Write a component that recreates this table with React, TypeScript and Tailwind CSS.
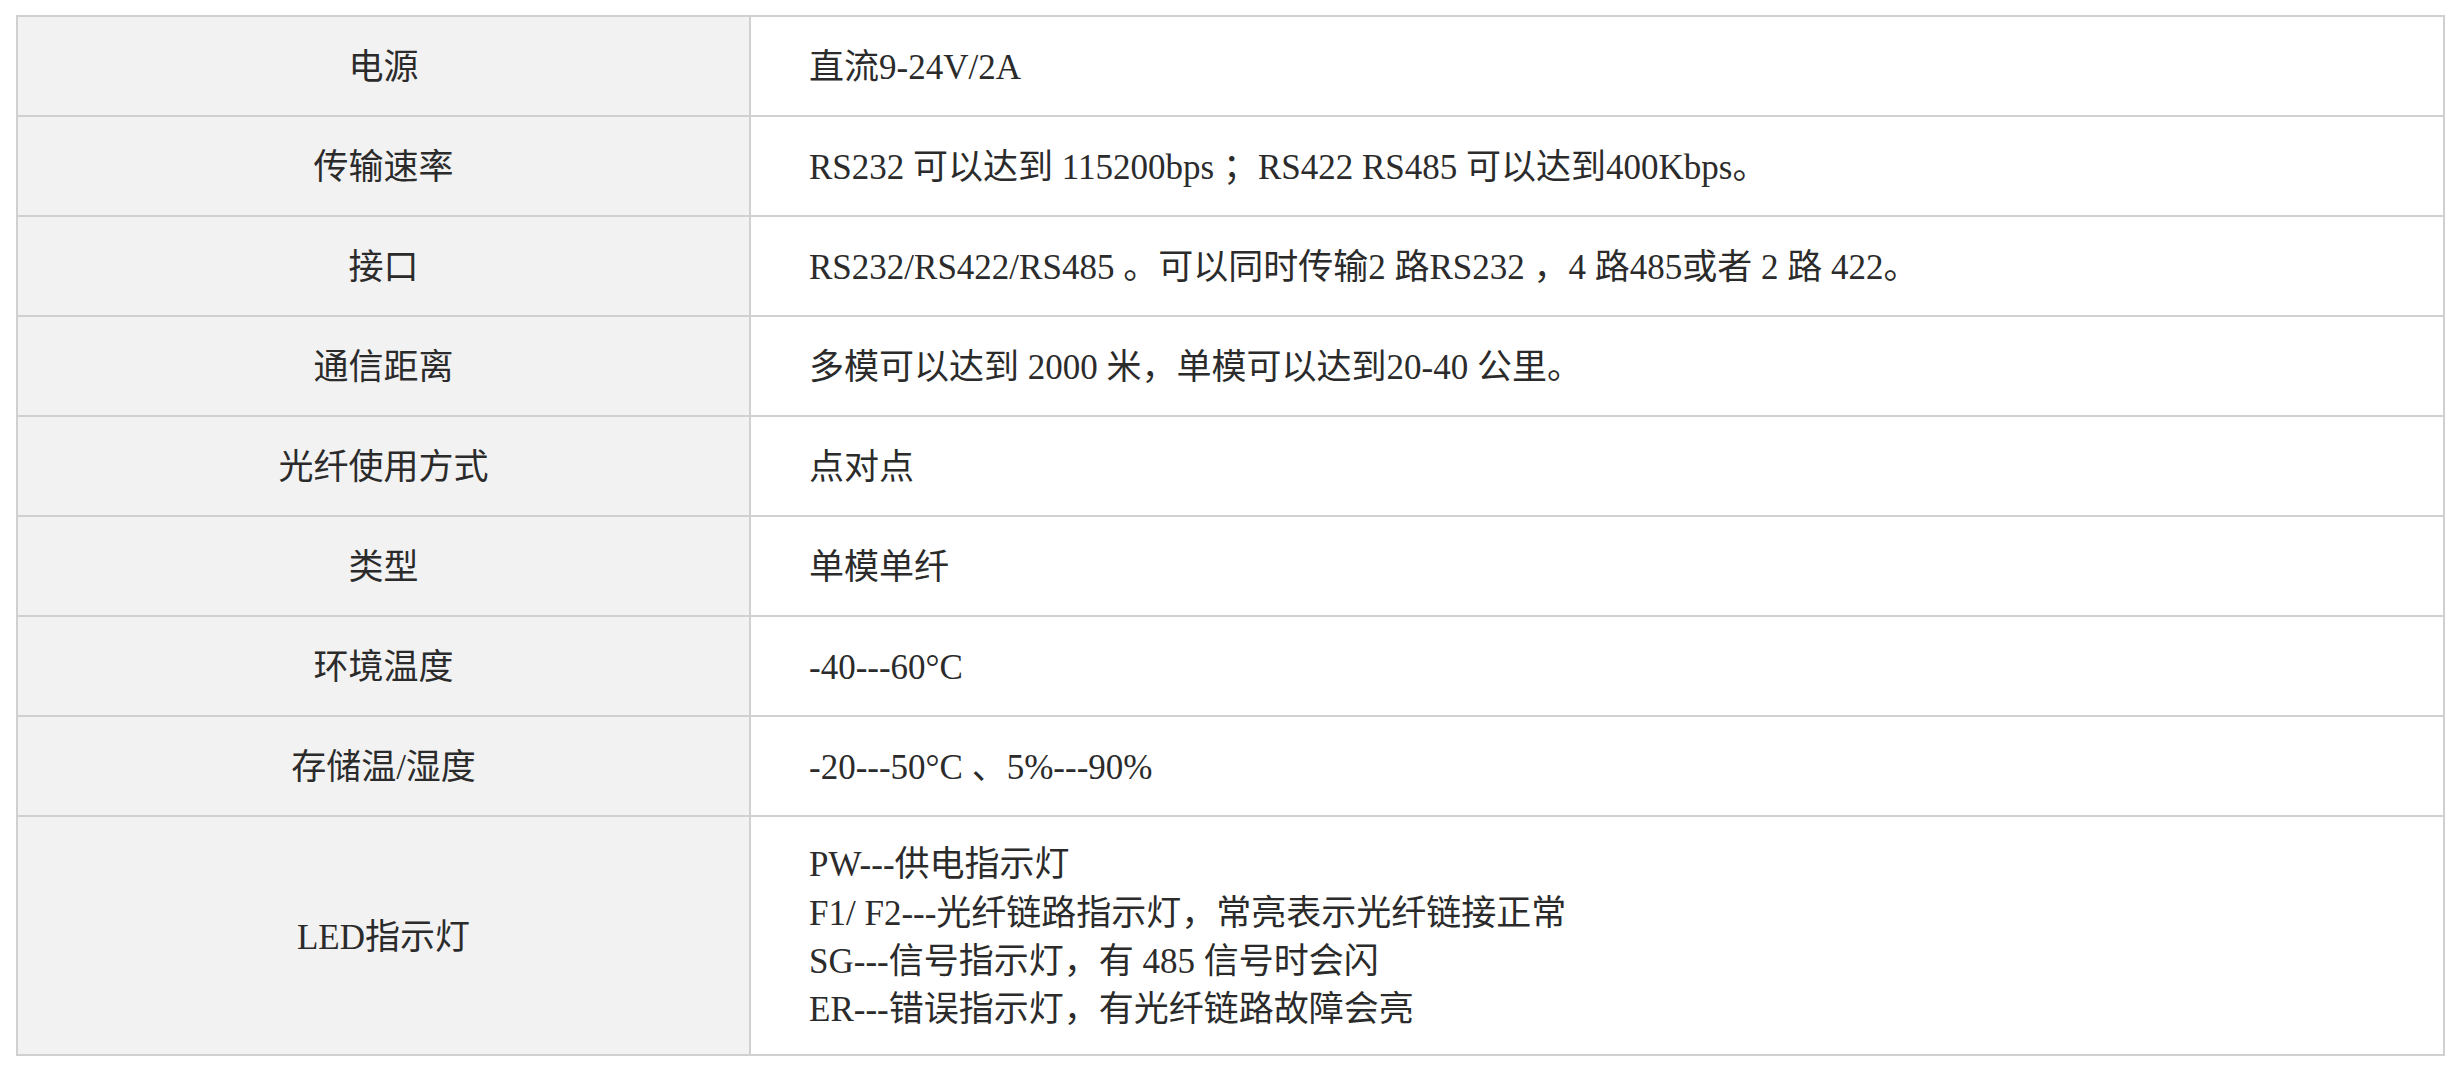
import React from "react";

const rows: { label: string; value: React.ReactNode; tall?: boolean }[] = [
  { label: "电源", value: "直流9-24V/2A" },
  { label: "传输速率", value: "RS232 可以达到 115200bps ；RS422 RS485 可以达到400Kbps。" },
  { label: "接口", value: "RS232/RS422/RS485 。可以同时传输2 路RS232 ，4 路485或者 2 路 422。" },
  { label: "通信距离", value: "多模可以达到 2000 米，单模可以达到20-40 公里。" },
  { label: "光纤使用方式", value: "点对点" },
  { label: "类型", value: "单模单纤" },
  { label: "环境温度", value: "-40---60°C" },
  { label: "存储温/湿度", value: "-20---50°C 、5%---90%" },
  {
    label: "LED指示灯",
    tall: true,
    value: (
      <div className="flex flex-col">
        <span>PW---供电指示灯</span>
        <span>F1/ F2---光纤链路指示灯，常亮表示光纤链接正常</span>
        <span>SG---信号指示灯，有 485 信号时会闪</span>
        <span>ER---错误指示灯，有光纤链路故障会亮</span>
      </div>
    ),
  },
];

export default function App() {
  return (
    <div
      className="min-h-screen bg-white pt-[15px] pl-[16px] text-[#2b2b2b] text-[35px] leading-[48.4px]"
      style={{ fontFamily: '"Liberation Serif", "Noto Sans CJK SC", serif' }}
    >
      <div className="w-[2429px] grid grid-cols-[733px_1fr] border-l-2 border-t-2 border-[#d0d0d0]">
        {rows.map((r, i) => (
          <React.Fragment key={i}>
            <div
              className={`${r.tall ? "h-[239px]" : "h-[100px]"} bg-[#f2f2f2] border-r-2 border-b-2 border-[#d0d0d0] flex items-center justify-center pt-[5px]`}
            >
              {r.label}
            </div>
            <div
              className={`${r.tall ? "h-[239px]" : "h-[100px]"} bg-white border-r-2 border-b-2 border-[#d0d0d0] flex items-center pl-[58px] pt-[5px]`}
            >
              {r.value}
            </div>
          </React.Fragment>
        ))}
      </div>
    </div>
  );
}
